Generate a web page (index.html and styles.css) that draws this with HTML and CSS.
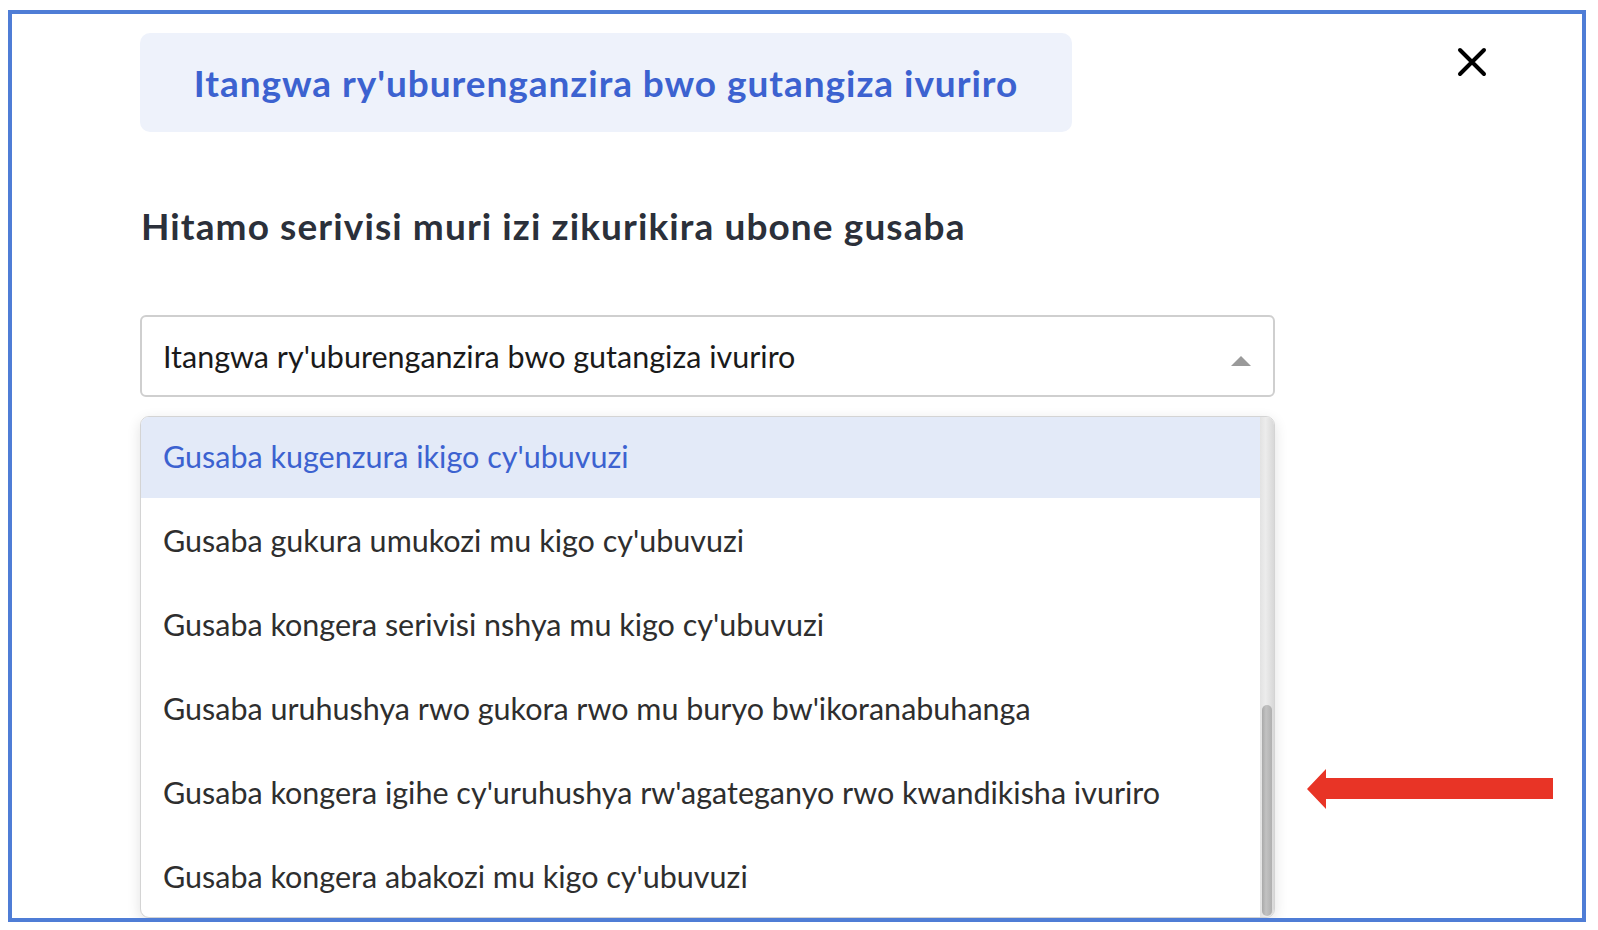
FILE: index.html
```html
<!DOCTYPE html>
<html lang="rw">
<head>
<meta charset="utf-8">
<title>Itangwa ry'uburenganzira</title>
<link rel="stylesheet" href="styles.css">
</head>
<body>
<div class="frame">
  <div class="content">
    <div class="title-box">Itangwa ry'uburenganzira bwo gutangiza ivuriro</div>
    <h2 class="heading">Hitamo serivisi muri izi zikurikira ubone gusaba</h2>
    <div class="select">
      <span class="select-value">Itangwa ry'uburenganzira bwo gutangiza ivuriro</span>
      <span class="caret"></span>
    </div>
    <div class="dropdown">
      <ul class="options">
        <li class="option active">Gusaba kugenzura ikigo cy'ubuvuzi</li>
        <li class="option">Gusaba gukura umukozi mu kigo cy'ubuvuzi</li>
        <li class="option">Gusaba kongera serivisi nshya mu kigo cy'ubuvuzi</li>
        <li class="option">Gusaba uruhushya rwo gukora rwo mu buryo bw'ikoranabuhanga</li>
        <li class="option">Gusaba kongera igihe cy'uruhushya rw'agateganyo rwo kwandikisha ivuriro</li>
        <li class="option">Gusaba kongera abakozi mu kigo cy'ubuvuzi</li>
      </ul>
      <div class="scrollbar"><div class="thumb"></div></div>
    </div>
  </div>
  <button class="close" aria-label="Close">
    <svg width="30" height="30" viewBox="0 0 30 30"><path d="M3 3 L27 27 M27 3 L3 27" stroke="#000" stroke-width="4" stroke-linecap="round"/></svg>
  </button>
  <svg class="arrow" width="248" height="42" viewBox="0 0 248 42"><polygon points="0,20 19,0 19,9 246,9 246,30 19,30 19,40" fill="#e83426"/></svg>
</div>
</body>
</html>
```
FILE: styles.css
```css
* { box-sizing: border-box; }
html, body { margin: 0; padding: 0; background: #fff; }
body { font-family: "Lato", "Noto Sans", sans-serif; }
.frame {
  position: relative;
  margin: 10px 12px 8px 8px;
  width: 1578px;
  height: 912px;
  border: 4px solid #4f7dd6;
  overflow: hidden;
}
.content {
  padding: 19px 0 0 128px;
  width: 1263px;
}
.title-box {
  width: 932px;
  height: 99px;
  background: #eef2fb;
  border-radius: 10px;
  color: #3c62d0;
  font-size: 37px;
  letter-spacing: 0.95px;
  font-weight: 700;
  display: flex;
  align-items: center;
  justify-content: center;
}
.heading {
  margin: 72px 0 0 1px;
  font-size: 37px;
  letter-spacing: 1.1px;
  font-weight: 700;
  color: #2b303a;
  line-height: 44px;
}
.select {
  margin-top: 67px;
  height: 82px;
  border: 2px solid #cfcfcf;
  border-radius: 6px;
  display: flex;
  align-items: center;
  justify-content: space-between;
  padding: 0 22px 0 21px;
  font-size: 30.5px;
  color: #1a1a1a;
}
.caret {
  width: 0; height: 0;
  border-left: 10px solid transparent;
  border-right: 10px solid transparent;
  border-bottom: 10px solid #9a9a9a;
  margin-top: 10px;
}
.dropdown {
  margin-top: 19px;
  height: 502px;
  border: 1px solid #d4d4d4;
  border-radius: 9px;
  box-shadow: 0 4px 14px rgba(0,0,0,0.12);
  display: flex;
  overflow: hidden;
  background: #fff;
}
.options {
  list-style: none;
  margin: 0;
  padding: 0;
  flex: 1;
}
.option {
  height: 84px;
  display: flex;
  align-items: center;
  padding-left: 22px;
  font-size: 30.5px;
  color: #2e2e2e;
}
.option.active {
  height: 81px;
  padding-bottom: 4px;
  background: #e3eaf8;
  color: #3c62d0;
}
.scrollbar {
  width: 14px;
  background: linear-gradient(to right, #e2e2e2, #ececec 40%, #d8d8d8);
  display: flex;
  flex-direction: column;
  justify-content: flex-end;
  padding-bottom: 1px;
}
.thumb {
  height: 211px;
  margin: 0 2px;
  border-radius: 6px;
  background: linear-gradient(to right, #a9a9a9, #c2c2c2 40%, #b0b0b0);
}
.close {
  position: absolute;
  left: 1445px;
  top: 33px;
  width: 30px;
  height: 30px;
  padding: 0;
  border: 0;
  background: none;
}
.close svg { display: block; }
.arrow {
  position: absolute;
  left: 1295px;
  top: 755px;
}
```
